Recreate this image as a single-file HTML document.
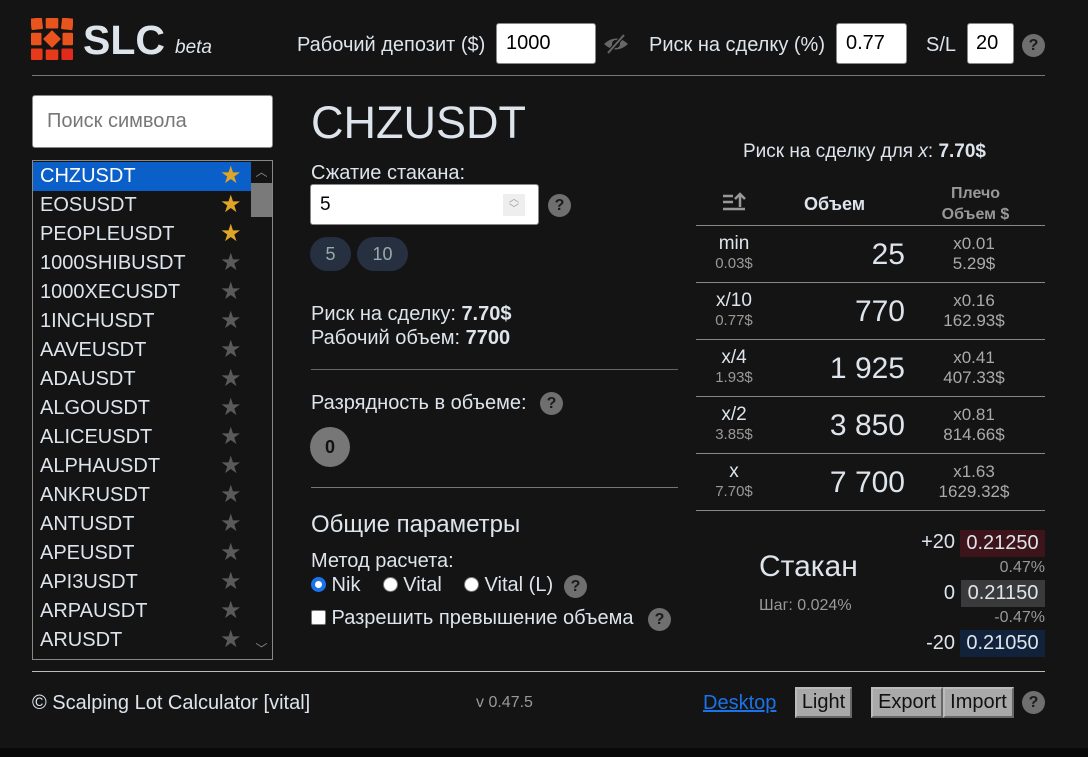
<!DOCTYPE html><html><head><meta charset="utf-8"><style>
*{box-sizing:border-box;margin:0;padding:0}
body{width:1088px;height:757px;background:#141414;color:#dde4ec;font-family:"Liberation Sans",sans-serif;position:relative;overflow:hidden}
.a{position:absolute}
.q{position:absolute;width:23px;height:23px;border-radius:50%;background:#6f6f6f;color:#1a1a1a;font-weight:bold;font-size:16px;text-align:center;line-height:23px}
.inp{position:absolute;background:#fff;border:1px solid #888;border-radius:3px;color:#000;font-size:20px;padding-left:9px}
.row{height:29px;line-height:29px;font-size:20px;padding-left:7px;position:relative;color:#dde4ec}
.row .s{position:absolute;left:187px;top:-1px;color:#5a5a5a;font-size:24px}
.sel{background:#0b5fc9;color:#fff}
.gold{color:#e0a526!important}
.hl{position:absolute;height:1px;background:#666}
.tr{position:absolute;left:696px;width:349px;height:57px;border-bottom:1px solid #888}
.c1{position:absolute;left:0;width:76px;text-align:center;top:8px;font-size:19px;line-height:20px}
.c1 small{display:block;font-size:15px;color:#999}
.c2{position:absolute;right:140px;top:12px;font-size:30px}
.c3{position:absolute;left:228px;width:100px;text-align:center;top:8px;font-size:17px;line-height:20px;color:#aaa}
.btn{position:absolute;background:#a9a9a9;color:#111;font-size:20px;text-align:center;border:2px outset #bbb;height:31px;line-height:27px}
</style></head><body>
<svg class="a" style="left:31px;top:18px" width="42" height="42" viewBox="0 0 40 40">
<g fill="#e8531e"><rect x="0" y="0" width="11" height="11" rx="1" transform="rotate(-6 5 6)"/><rect x="14" y="0" width="12" height="10" rx="1"/><rect x="29" y="0" width="11" height="11" rx="1" transform="rotate(6 34 6)"/><rect x="0" y="14" width="10" height="12" rx="1"/><rect x="30" y="14" width="10" height="12" rx="1"/><rect x="14" y="14" width="12" height="12" transform="rotate(45 20 20)"/><rect x="0" y="29" width="11" height="11" rx="1" fill="#e63a1a"/><rect x="14" y="30" width="12" height="10" rx="1" fill="#e63a1a"/><rect x="29" y="29" width="11" height="11" rx="1" fill="#e02a1a"/></g></svg>
<div class="a" style="left:83px;top:17px;font-size:41px;font-weight:bold;color:#dde4ec">SLC</div>
<div class="a" style="left:175px;top:37px;font-size:19px;font-style:italic">beta</div>
<div class="a" style="left:297px;top:34px;font-size:20px">Рабочий депозит ($)</div>
<div class="inp" style="left:496px;top:23px;width:100px;height:41px;line-height:39px">1000</div>
<svg class="a" style="left:602px;top:33px" width="28" height="22" viewBox="0 0 28 22"><path d="M2 11 Q14 0 26 11 Q14 22 2 11Z" fill="#666"/><circle cx="14" cy="11" r="4" fill="#141414"/><path d="M6 20 L22 2" stroke="#141414" stroke-width="4"/><path d="M6 20 L22 2" stroke="#666" stroke-width="2"/></svg>
<div class="a" style="left:649px;top:34px;font-size:20px">Риск на сделку (%)</div>
<div class="inp" style="left:836px;top:23px;width:71px;height:41px;line-height:39px">0.77</div>
<div class="a" style="left:926px;top:34px;font-size:20px">S/L</div>
<div class="inp" style="left:967px;top:23px;width:47px;height:41px;line-height:39px;padding-left:8px">20</div>
<div class="q" style="left:1022px;top:34px">?</div>
<div class="hl" style="left:32px;top:75px;width:1013px;background:#777"></div>

<div class="inp" style="left:32px;top:95px;width:241px;height:53px;line-height:51px;color:#777;padding-left:14px;font-size:20px">Поиск символа</div>
<div class="a" style="left:32px;top:160px;width:241px;height:500px;border:1px solid #888;overflow:hidden">
<div class="a" style="left:218px;top:0;width:21px;height:498px;background:#141414"><div style="color:#888;text-align:center;font-size:12px;margin-top:2px">︿</div><div class="a" style="left:0;top:22px;width:21px;height:34px;background:#7a7a7a"></div><div class="a" style="bottom:2px;width:21px;color:#888;text-align:center;font-size:12px">﹀</div></div>
<div style="width:218px;padding-top:1px">
<div class="row sel">CHZUSDT<span class="s gold">★</span></div>
<div class="row">EOSUSDT<span class="s gold">★</span></div>
<div class="row">PEOPLEUSDT<span class="s gold">★</span></div>
<div class="row">1000SHIBUSDT<span class="s">★</span></div>
<div class="row">1000XECUSDT<span class="s">★</span></div>
<div class="row">1INCHUSDT<span class="s">★</span></div>
<div class="row">AAVEUSDT<span class="s">★</span></div>
<div class="row">ADAUSDT<span class="s">★</span></div>
<div class="row">ALGOUSDT<span class="s">★</span></div>
<div class="row">ALICEUSDT<span class="s">★</span></div>
<div class="row">ALPHAUSDT<span class="s">★</span></div>
<div class="row">ANKRUSDT<span class="s">★</span></div>
<div class="row">ANTUSDT<span class="s">★</span></div>
<div class="row">APEUSDT<span class="s">★</span></div>
<div class="row">API3USDT<span class="s">★</span></div>
<div class="row">ARPAUSDT<span class="s">★</span></div>
<div class="row">ARUSDT<span class="s">★</span></div>
<div class="row">ASTRUSDT<span class="s">★</span></div>
</div></div>

<div class="a" style="left:311px;top:97px;font-size:45px">CHZUSDT</div>
<div class="a" style="left:311px;top:162px;font-size:20px">Сжатие стакана:</div>
<div class="inp" style="left:310px;top:184px;width:229px;height:41px;line-height:39px;font-size:19px">5<span class="a" style="right:13px;top:9px;width:22px;height:22px;background:#eee;color:#999;font-size:10px;line-height:10px;text-align:center;padding-top:1px">︿<br>﹀</span></div>
<div class="q" style="left:548px;top:194px">?</div>
<div class="a" style="left:310px;top:237px;width:41px;height:34px;border-radius:17px;background:#263040;color:#9aa;text-align:center;line-height:34px;font-size:18px">5</div>
<div class="a" style="left:357px;top:237px;width:51px;height:34px;border-radius:17px;background:#263040;color:#9aa;text-align:center;line-height:34px;font-size:18px">10</div>
<div class="a" style="left:311px;top:302px;font-size:20px;line-height:24px">Риск на сделку: <b>7.70$</b><br>Рабочий объем: <b>7700</b></div>
<div class="hl" style="left:311px;top:369px;width:367px"></div>
<div class="a" style="left:311px;top:392px;font-size:20px">Разрядность в объеме:</div>
<div class="q" style="left:540px;top:392px">?</div>
<div class="a" style="left:310px;top:427px;width:40px;height:40px;border-radius:50%;background:#777;color:#111;font-weight:bold;text-align:center;line-height:40px;font-size:18px">0</div>
<div class="hl" style="left:311px;top:487px;width:367px;background:#777"></div>
<div class="a" style="left:311px;top:511px;font-size:24px">Общие параметры</div>
<div class="a" style="left:311px;top:550px;font-size:20px">Метод расчета:</div>
<div class="a" style="left:311px;top:574px;font-size:20px;white-space:nowrap">
<span style="display:inline-block;width:15px;height:15px;border-radius:50%;border:4px solid #1a73e8;background:#fff;vertical-align:-1px"></span> Nik &nbsp;&nbsp;
<span style="display:inline-block;width:15px;height:15px;border-radius:50%;background:#fff;border:1px solid #777;vertical-align:-1px"></span> Vital &nbsp;&nbsp;
<span style="display:inline-block;width:15px;height:15px;border-radius:50%;background:#fff;border:1px solid #777;vertical-align:-1px"></span> Vital (L)</div>
<div class="q" style="left:564px;top:575px">?</div>
<div class="a" style="left:311px;top:607px;font-size:20px"><span style="display:inline-block;width:15px;height:15px;background:#fff;border:1px solid #777;border-radius:2px;vertical-align:-1px"></span> Разрешить превышение объема</div>
<div class="q" style="left:648px;top:608px">?</div>

<div class="a" style="left:743px;top:141px;font-size:19px">Риск на сделку для <i>x</i>: <b>7.70$</b></div>
<svg class="a" style="left:723px;top:191px" width="24" height="22" viewBox="0 0 24 22"><g stroke="#999" stroke-width="2.5"><path d="M0 5h10M0 11h10M0 18h22M17 16V3M12 8l5-5 5 5" fill="none"/></g></svg>
<div class="a" style="left:804px;top:194px;font-size:18px;font-weight:bold">Объем</div>
<div class="a" style="left:928px;top:183px;width:95px;text-align:center;font-size:16px;font-weight:bold;color:#999;line-height:21px">Плечо<br>Объем $</div>
<div class="hl" style="left:696px;top:225px;width:349px;background:#888"></div>
<div class="tr" style="top:226px"><div class="c1">min<small>0.03$</small></div><div class="c2">25</div><div class="c3">x0.01<br>5.29$</div></div>
<div class="tr" style="top:283px"><div class="c1">x/10<small>0.77$</small></div><div class="c2">770</div><div class="c3">x0.16<br>162.93$</div></div>
<div class="tr" style="top:340px"><div class="c1">x/4<small>1.93$</small></div><div class="c2">1 925</div><div class="c3">x0.41<br>407.33$</div></div>
<div class="tr" style="top:397px"><div class="c1">x/2<small>3.85$</small></div><div class="c2">3 850</div><div class="c3">x0.81<br>814.66$</div></div>
<div class="tr" style="top:454px"><div class="c1">x<small>7.70$</small></div><div class="c2">7 700</div><div class="c3">x1.63<br>1629.32$</div></div>

<div class="a" style="left:759px;top:550px;font-size:30px">Стакан</div>
<div class="a" style="left:759px;top:597px;font-size:16px;color:#999">Шаг: 0.024%</div>
<div class="a" style="left:900px;top:531px;width:55px;text-align:right;font-size:20px">+20</div>
<div class="a" style="left:960px;top:530px;width:85px;height:27px;background:#3c1419;text-align:center;font-size:20px;line-height:27px">0.21250</div>
<div class="a" style="left:960px;top:559px;width:85px;text-align:right;font-size:16px;color:#999">0.47%</div>
<div class="a" style="left:900px;top:582px;width:55px;text-align:right;font-size:20px">0</div>
<div class="a" style="left:961px;top:580px;width:84px;height:27px;background:#3a3a3a;text-align:center;font-size:20px;line-height:27px">0.21150</div>
<div class="a" style="left:940px;top:609px;width:105px;text-align:right;font-size:16px;color:#999">-0.47%</div>
<div class="a" style="left:900px;top:632px;width:55px;text-align:right;font-size:20px">-20</div>
<div class="a" style="left:960px;top:630px;width:85px;height:27px;background:#12223a;text-align:center;font-size:20px;line-height:27px">0.21050</div>

<div class="hl" style="left:32px;top:671px;width:1013px;background:#bbb"></div>
<div class="a" style="left:32px;top:692px;font-size:20px">© Scalping Lot Calculator [vital]</div>
<div class="a" style="left:476px;top:694px;font-size:16px;color:#999">v 0.47.5</div>
<div class="a" style="left:703px;top:692px;font-size:20px;color:#1a73e8;text-decoration:underline">Desktop</div>
<div class="btn" style="left:795px;top:687px;width:57px">Light</div>
<div class="btn" style="left:871px;top:687px;width:72px">Export</div>
<div class="btn" style="left:943px;top:687px;width:71px">Import</div>
<div class="q" style="left:1022px;top:691px">?</div>
<div class="a" style="left:0;top:748px;width:1088px;height:9px;background:#090909"></div>
</body></html>
